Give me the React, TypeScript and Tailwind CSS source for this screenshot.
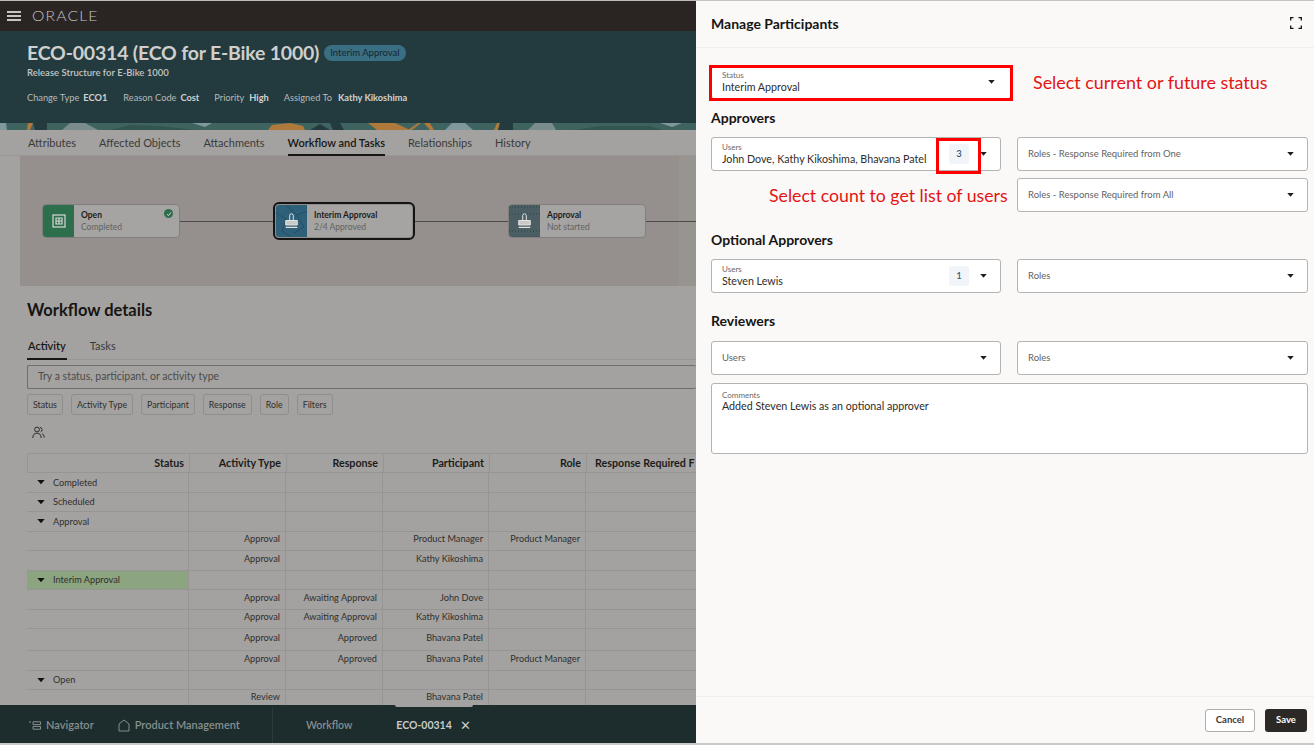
import React from "react";

const FONT = { fontFamily: '"Lato", "Noto Sans", sans-serif' };

function Caret({ className = "", w = 7 }: { className?: string; w?: number }) {
  return (
    <svg width={w} height={w * 0.55} viewBox="0 0 9 5" className={className}>
      <path d="M0.3 0 H8.7 L4.5 4.8 Z" fill="currentColor" />
    </svg>
  );
}

function Stamp() {
  return (
    <svg width="13" height="16" viewBox="0 0 13 16" fill="none" stroke="#e2e2e0" strokeWidth="1">
      <path d="M4.7 7 V2.6 a1.8 1.8 0 0 1 3.6 0 V7" />
      <path d="M0.7 7.5 H12.3 V12 H0.7 Z" fill="#c9c9c7" />
      <path d="M0.7 14.3 H12.3" strokeWidth="1.3" />
    </svg>
  );
}

function Node({
  title,
  sub,
  tile,
  selected,
  check,
  icon,
  ml,
  pattern,
}: {
  title: string;
  sub: string;
  tile: string;
  selected?: boolean;
  check?: boolean;
  icon: React.ReactNode;
  ml: string;
  pattern?: React.ReactNode;
}) {
  return (
    <div
      className={`relative shrink-0 w-[138px] h-[34px] flex rounded-[4px] overflow-hidden bg-[#a5a4a2] ${ml} ${
        selected ? "outline-2 outline-[#141414] border border-[#8f8e8c]" : "border border-[#807f7d]"
      }`}
    >
      <div className={`relative w-[31px] shrink-0 flex items-center justify-center ${tile}`}>
        {pattern}
        <div className="relative flex">{icon}</div>
      </div>
      <div className="pl-[7px] pt-[5px] flex-1 min-w-0">
        <div className="text-[8.5px] leading-[11px] font-bold text-[#1d1c1b] whitespace-nowrap">{title}</div>
        <div className="text-[8.5px] leading-[11px] mt-[1px] text-[#63625f] whitespace-nowrap">{sub}</div>
      </div>
      {check && (
        <div className="absolute right-[6px] top-[4px] w-[9px] h-[9px] rounded-full bg-[#2d6e4c] flex items-center justify-center">
          <svg width="6" height="6" viewBox="0 0 6 6" fill="none" stroke="#d5d5d3" strokeWidth="1">
            <path d="M1 3.2 L2.5 4.6 L5 1.4" />
          </svg>
        </div>
      )}
    </div>
  );
}

const rows: { h: string; s?: string; a?: string; r?: string; p?: string; ro?: string; g?: boolean; group?: boolean }[] = [
  { h: "h-[20px]", s: "Completed", group: true },
  { h: "h-[19px]", s: "Scheduled", group: true },
  { h: "h-[20px]", s: "Approval", group: true },
  { h: "h-[19px]", a: "Approval", p: "Product Manager", ro: "Product Manager" },
  { h: "h-[20px]", a: "Approval", p: "Kathy Kikoshima" },
  { h: "h-[19px]", s: "Interim Approval", group: true, g: true },
  { h: "h-[20px]", a: "Approval", r: "Awaiting Approval", p: "John Dove" },
  { h: "h-[19px]", a: "Approval", r: "Awaiting Approval", p: "Kathy Kikoshima" },
  { h: "h-[22px]", a: "Approval", r: "Approved", p: "Bhavana Patel" },
  { h: "h-[20px]", a: "Approval", r: "Approved", p: "Bhavana Patel", ro: "Product Manager" },
  { h: "h-[19px]", s: "Open", group: true },
  { h: "h-[19px]", a: "Review", p: "Bhavana Patel" },
];

const cols = "grid grid-cols-[162px_97px_97px_106px_97px_120px]";
const cell = "border-r border-[#969593] flex items-center justify-end pr-[5px] whitespace-nowrap overflow-hidden";

function Field({
  label,
  value,
  count,
  className = "",
  muted,
  caret = "right-[13px]",
}: {
  label?: string;
  value?: string;
  count?: string;
  className?: string;
  muted?: string;
  caret?: string;
}) {
  return (
    <div className={`relative h-[34px] bg-white border border-[#b4b3b1] rounded-[3px] flex items-center ${className}`}>
      <div className="pl-[10px] flex-1 min-w-0">
        {muted ? (
          <div className="pt-[1px] text-[9.5px] text-[#64625f] whitespace-nowrap">{muted}</div>
        ) : (
          <>
            <div className="text-[8px] leading-[9px] text-[#6b6967]">{label}</div>
            <div className="text-[10.7px] leading-[13px] text-[#2e2c2a] whitespace-nowrap">{value}</div>
          </>
        )}
      </div>
      {count && (
        <div className="absolute right-[31px] top-[6px] w-[20px] h-[20px] rounded-[3px] bg-[#f1f5f9] text-[#36597a] text-[9.5px] flex items-center justify-center font-semibold">
          {count}
        </div>
      )}
      <Caret className={`absolute ${caret} top-1/2 -translate-y-1/2 text-[#1f1e1c]`} />
    </div>
  );
}

export default function App() {
  return (
    <div style={FONT} className="relative w-[1314px] h-[745px] overflow-hidden flex bg-[#d0d0ce]">
      {/* left dimmed page */}
      <div className="w-[696px] h-[745px] shrink-0 flex flex-col bg-[#a3a2a0] overflow-hidden">
        <div className="h-px shrink-0 bg-[#bdbcba]" />
        <div className="h-[30px] shrink-0 bg-[#2a2523] flex items-center pl-[7px]">
          <div className="w-[14px] flex flex-col gap-[2.5px]">
            <div className="h-[1.5px] bg-[#c5c5c4]" />
            <div className="h-[1.5px] bg-[#c5c5c4]" />
            <div className="h-[1.5px] bg-[#c5c5c4]" />
          </div>
          <div className="ml-[11px] text-[13px] leading-none font-light tracking-[1px] text-[#c4c3c1] origin-left scale-x-[1.2]">
            ORACLE
          </div>
        </div>
        <div className="h-[92px] shrink-0 bg-[#233b3e] pl-[27px] pt-[9px] text-[#d1d1cf]">
          <div className="flex items-center">
            <span className="text-[19.5px] leading-[26px] font-bold text-[#cfcfcd] tracking-[-0.2px] whitespace-nowrap">
              ECO-00314 (ECO for E-Bike 1000)
            </span>
            <span className="ml-[5px] h-[16px] px-[6px] rounded-full bg-[#3a6e83] text-[#15282f] text-[9.5px] leading-[16px] whitespace-nowrap">
              Interim Approval
            </span>
          </div>
          <div className="text-[9.5px] leading-[12px] mt-[1px] font-semibold text-[#c4c4c2]">
            Release Structure for E-Bike 1000
          </div>
          <div className="flex mt-[13px] text-[9.25px] leading-[12px] whitespace-nowrap">
            <span className="text-[#b9b9b7]">Change Type</span>
            <span className="ml-[4px] font-bold">ECO1</span>
            <span className="ml-[16px] text-[#b9b9b7]">Reason Code</span>
            <span className="ml-[4px] font-bold">Cost</span>
            <span className="ml-[15px] text-[#b9b9b7]">Priority</span>
            <span className="ml-[5px] font-bold">High</span>
            <span className="ml-[15px] text-[#b9b9b7]">Assigned To</span>
            <span className="ml-[6px] font-bold">Kathy Kikoshima</span>
          </div>
        </div>
        {/* decorative band */}
        <svg width="696" height="7" viewBox="0 0 696 7" className="shrink-0 block">
          <rect width="696" height="7" fill="#3f6460" />
          <path d="M0 0 H6 L7 7 H0 Z" fill="#7f989b" />
          <path d="M28 0 H33 L30 7 H27 Z" fill="#b0793c" />
          <path d="M33 0 H47 V7 H35 Z" fill="#233b3e" />
          <path d="M62 7 L70 0 H85 L98 7 Z" fill="#7a8d8c" />
          <path d="M110 7 L130 2 L160 3 L195 7 Z" fill="#345450" />
          <path d="M192 0 H212 L205 4 Z" fill="#7f989b" />
          <path d="M268 7 L272 2 L290 0 L303 3 L305 7 Z" fill="#b0793c" />
          <path d="M310 7 L320 1 L330 7 Z" fill="#233b3e" />
          <path d="M330 0 H345 V7 H333 Z" fill="#233b3e" />
          <path d="M340 0 H352 V7 H344 Z" fill="#3f6460" />
          <path d="M368 0 H395 L410 7 H377 Z" fill="#b0793c" />
          <path d="M408 7 L418 0 L421 0 L412 7 Z" fill="#b0793c" />
          <path d="M424 0 H430 L434 7 H430 Z" fill="#b0793c" />
          <path d="M445 7 L452 0 H465 L473 7 Z" fill="#7f989b" />
          <path d="M494 7 L497 0 H500 L498 7 Z" fill="#b0793c" />
          <path d="M500 0 H513 V7 H498 Z" fill="#233b3e" />
          <path d="M528 7 L535 0 H552 L556 7 Z" fill="#7a8d8c" />
          <path d="M575 7 L600 3 L650 3 L662 7 Z" fill="#345450" />
          <path d="M660 0 H682 L672 4 Z" fill="#7f989b" />
        </svg>
        {/* tabs */}
        <div className="h-[26px] shrink-0 pl-[28px] flex gap-[23px] text-[11px] text-[#3b3a38] whitespace-nowrap border-b border-[#989795]">
          {["Attributes", "Affected Objects", "Attachments", "Workflow and Tasks", "Relationships", "History"].map((t, i) => (
            <div
              key={t}
              className={`h-[26px] pt-[5px] ${i === 3 ? "font-semibold text-[#171614] border-b-2 border-[#171614]" : ""}`}
            >
              {t}
            </div>
          ))}
        </div>
        {/* workflow canvas */}
        <div className="h-[130px] shrink-0 ml-[20px] bg-[#95908d] relative flex items-center pl-[22px]">
          <div className="absolute right-0 top-0 bottom-0 w-[17px] bg-[#989590]" />
          <div className="absolute left-[22px] right-0 top-[65px] h-px bg-[#4c4b49]" />
          <Node
            title="Open"
            sub="Completed"
            tile="bg-[#2d6e4c]"
            check
            ml=""
            icon={
              <svg width="14" height="14" viewBox="0 0 14 14" fill="none" stroke="#d8d8d6" strokeWidth="1.2">
                <rect x="1" y="1" width="12" height="12" />
                <path d="M4 4 H10 V10 H4 Z M7 4 V10 M4 7 H10" />
              </svg>
            }
          />
          <Node
            title="Interim Approval"
            sub="2/4 Approved"
            tile="bg-[#2f6079]"
            selected
            ml="ml-[95px]"
            icon={<Stamp />}
            pattern={
              <svg className="absolute inset-0" width="31" height="34" viewBox="0 0 31 34" fill="none" stroke="#1f4458" strokeWidth="0.6">
                <path d="M0 8 L10 14 L6 26 L18 34 M31 6 L21 10 L10 0 M21 10 L28 22 L18 28" />
              </svg>
            }
          />
          <Node
            title="Approval"
            sub="Not started"
            tile="bg-[#4a5e63]"
            ml="ml-[95px]"
            icon={<Stamp />}
            pattern={
              <svg className="absolute inset-0" width="31" height="34" viewBox="0 0 31 34" fill="none" stroke="#2f4146" strokeWidth="1" strokeDasharray="1 2">
                <path d="M0 2 H31 M0 9 H31 M0 26 H31 M0 32 H31" />
              </svg>
            }
          />
        </div>
        {/* details */}
        <div className="flex-1 min-h-0 pl-[27px] overflow-hidden">
          <div className="text-[16.5px] leading-[22px] mt-[13px] font-bold text-[#161513]">Workflow details</div>
          <div className="mt-[15px] flex gap-[23px] h-[24px] text-[11px] text-[#3b3a38] border-b border-[#989795]">
            <div className="font-semibold text-[#171614] border-b-2 border-[#171614] h-[24px] pt-[2px] pl-[1px] pr-[1px]">
              Activity
            </div>
            <div className="pt-[2px]">Tasks</div>
          </div>
          <div className="mt-[5px] h-[24px] border border-[#6f6e6c] rounded-[2px] pl-[10px] flex items-center text-[10.5px] text-[#4c4b49] border-r-0">
            Try a status, participant, or activity type
          </div>
          <div className="mt-[5px] flex gap-[8px] text-[8.8px] text-[#2f2e2c]">
            {["Status", "Activity Type", "Participant", "Response", "Role", "Filters"].map((f) => (
              <div key={f} className="h-[21px] px-[5px] border border-[#8f8e8c] rounded-[3px] flex items-center whitespace-nowrap">
                {f}
              </div>
            ))}
          </div>
          <div className="mt-[9px] h-[18px] pl-[5px] flex items-center">
            <svg width="13" height="14" viewBox="0 0 13 14" fill="none" stroke="#1f1e1c" strokeWidth="0.9">
              <circle cx="5" cy="3.5" r="2.4" />
              <path d="M0.8 12 C0.8 8.5 2.6 7.2 5 7.2 C7.4 7.2 9.2 8.5 9.2 12" />
              <path d="M8 1.4 A2.4 2.4 0 0 1 8.6 6 M10 7.6 C11.4 8.2 12.2 9.6 12.2 11.6" />
            </svg>
          </div>
          <div className="mt-[11px] text-[9.2px] text-[#302f2d]">
            <div className={`${cols} h-[20px] border-y border-[#969593] font-bold text-[#1d1c1a] text-[10.7px] border-l`}>
              {["Status", "Activity Type", "Response", "Participant", "Role"].map((h) => (
                <div key={h} className={cell}>
                  {h}
                </div>
              ))}
              <div className="flex items-center pl-[8px] whitespace-nowrap overflow-hidden">Response Required F</div>
            </div>
            {rows.map((r, i) => (
              <div key={i} className={`${cols} ${r.h} border-b border-[#969593]`}>
                {r.group ? (
                  <div className={`flex items-center gap-[8px] pl-[10px] border-r border-[#969593] ${r.g ? "bg-[#8ca47f]" : ""}`}>
                    <Caret w={8} className="text-[#111]" />
                    <span>{r.s}</span>
                  </div>
                ) : (
                  <div className={cell} />
                )}
                <div className={`${cell} ${r.group ? "" : "pb-[4px]"}`}>{r.a}</div>
                <div className={`${cell} ${r.group ? "" : "pb-[4px]"}`}>{r.r}</div>
                <div className={`${cell} ${r.group ? "" : "pb-[4px]"}`}>{r.p}</div>
                <div className={`${cell} ${r.group ? "" : "pb-[4px]"}`}>{r.ro}</div>
                <div className={cell} />
              </div>
            ))}
          </div>
        </div>
        {/* bottom dock */}
        <div className="relative h-[38px] shrink-0 bg-[#1d2c2d] flex items-center pt-[2px] text-[11px] text-[#868f8e] whitespace-nowrap font-semibold">
          <div className="absolute left-[395px] top-0 w-[78px] h-[2px] bg-[#a3a2a0] rounded-b-[2px]" />
          <div className="w-[273px] h-full flex items-center pl-[29px] border-r border-[#2c3c3d]">
            <svg width="12" height="9" viewBox="0 0 12 9" fill="none" stroke="#868f8e" strokeWidth="1">
              <path d="M0 1 H2 M4 .8 H11.5 V3.6 H4 Z M4 5.4 H11.5 V8.2 H4 Z" />
            </svg>
            <span className="ml-[5px]">Navigator</span>
            <svg width="12" height="13" viewBox="0 0 12 13" fill="none" stroke="#868f8e" strokeWidth="1" className="ml-[24px]">
              <path d="M1 12 H11 V5 L6 1 L1 5 Z" />
            </svg>
            <span className="ml-[5px]">Product Management</span>
          </div>
          <span className="ml-[33px] mt-[1px] text-[10.5px]">Workflow</span>
          <span className="ml-[44px] mt-[1px] text-[10.5px] text-[#c7cbca] font-bold">ECO-00314</span>
          <span className="ml-[8px] mt-[1px] text-[#c7cbca] text-[13px] font-light leading-none">✕</span>
        </div>
        <div className="h-[2px] shrink-0 bg-[#c9c9c7]" />
      </div>

      {/* right drawer */}
      <div className="w-[618px] h-[745px] shrink-0 bg-[#fbf9f8] flex flex-col text-[#161513]">
        <div className="h-px shrink-0 bg-[#c4c3c1]" />
        <div className="h-[47px] shrink-0 pl-[15px] pr-[12px] pb-[2px] flex items-center justify-between border-b border-[#f1efed]">
          <span className="text-[14px] font-bold">Manage Participants</span>
          <svg width="12" height="12" viewBox="0 0 12 12" fill="none" stroke="#161513" strokeWidth="1.3">
            <path d="M0.7 3.5 V0.7 H3.5 M8.5 0.7 H11.3 V3.5 M11.3 8.5 V11.3 H8.5 M3.5 11.3 H0.7 V8.5" />
          </svg>
        </div>
        <div className="flex-1 pl-[15px] pr-[6px] pt-[17px]">
          <Field label="Status" value="Interim Approval" className="w-[300px]" caret="right-[15px]" />
          <div className="text-[14px] leading-[16px] font-bold mt-[11px]">Approvers</div>
          <div className="flex gap-[16px] mt-[11px]">
            <Field label="Users" value="John Dove, Kathy Kikoshima, Bhavana Patel" count="3" className="w-[290px]" />
            <Field muted="Roles - Response Required from One" className="w-[291px]" />
          </div>
          <div className="flex justify-end mt-[7px]">
            <Field muted="Roles - Response Required from All" className="w-[291px]" />
          </div>
          <div className="text-[14px] leading-[16px] font-bold mt-[20px]">Optional Approvers</div>
          <div className="flex gap-[16px] mt-[11px]">
            <Field label="Users" value="Steven Lewis" count="1" className="w-[290px]" />
            <Field muted="Roles" className="w-[291px]" />
          </div>
          <div className="text-[14px] leading-[16px] font-bold mt-[20px]">Reviewers</div>
          <div className="flex gap-[16px] mt-[12px]">
            <Field muted="Users" className="w-[290px]" />
            <Field muted="Roles" className="w-[291px]" />
          </div>
          <div className="h-[71px] w-[597px] mt-[8px] bg-white border border-[#b4b3b1] rounded-[3px] pl-[10px] pt-[7px]">
            <div className="text-[8px] leading-[9px] text-[#6b6967]">Comments</div>
            <div className="text-[10.7px] leading-[12px] text-[#2e2c2a]">Added Steven Lewis as an optional approver</div>
          </div>
        </div>
        <div className="h-[47px] shrink-0 border-t border-[#f1efed] flex items-center justify-end gap-[10px] pr-[7px] text-[9.5px] font-bold">
          <div className="w-[50px] h-[23px] border border-[#aeadab] rounded-[3px] bg-white flex items-center justify-center text-[#3a3937]">
            Cancel
          </div>
          <div className="w-[42px] h-[23px] rounded-[3px] bg-[#2c2825] text-white flex items-center justify-center">Save</div>
        </div>
        <div className="h-[2px] shrink-0 bg-[#c9c9c7]" />
      </div>

      {/* red annotations */}
      <div className="absolute left-[709px] top-[65px] w-[304px] h-[36px] border-[3px] border-[#ff0000] pointer-events-none" />
      <div className="absolute left-[936px] top-[138px] w-[45px] h-[36px] border-[3px] border-[#ff0000] pointer-events-none" />
      <div className="absolute left-[1033px] top-[71px] text-[17.9px] leading-[22px] text-[#e31414] whitespace-nowrap">
        Select current or future status
      </div>
      <div className="absolute left-[769px] top-[185px] text-[17.7px] leading-[22px] text-[#e31414] whitespace-nowrap">
        Select count to get list of users
      </div>
    </div>
  );
}
